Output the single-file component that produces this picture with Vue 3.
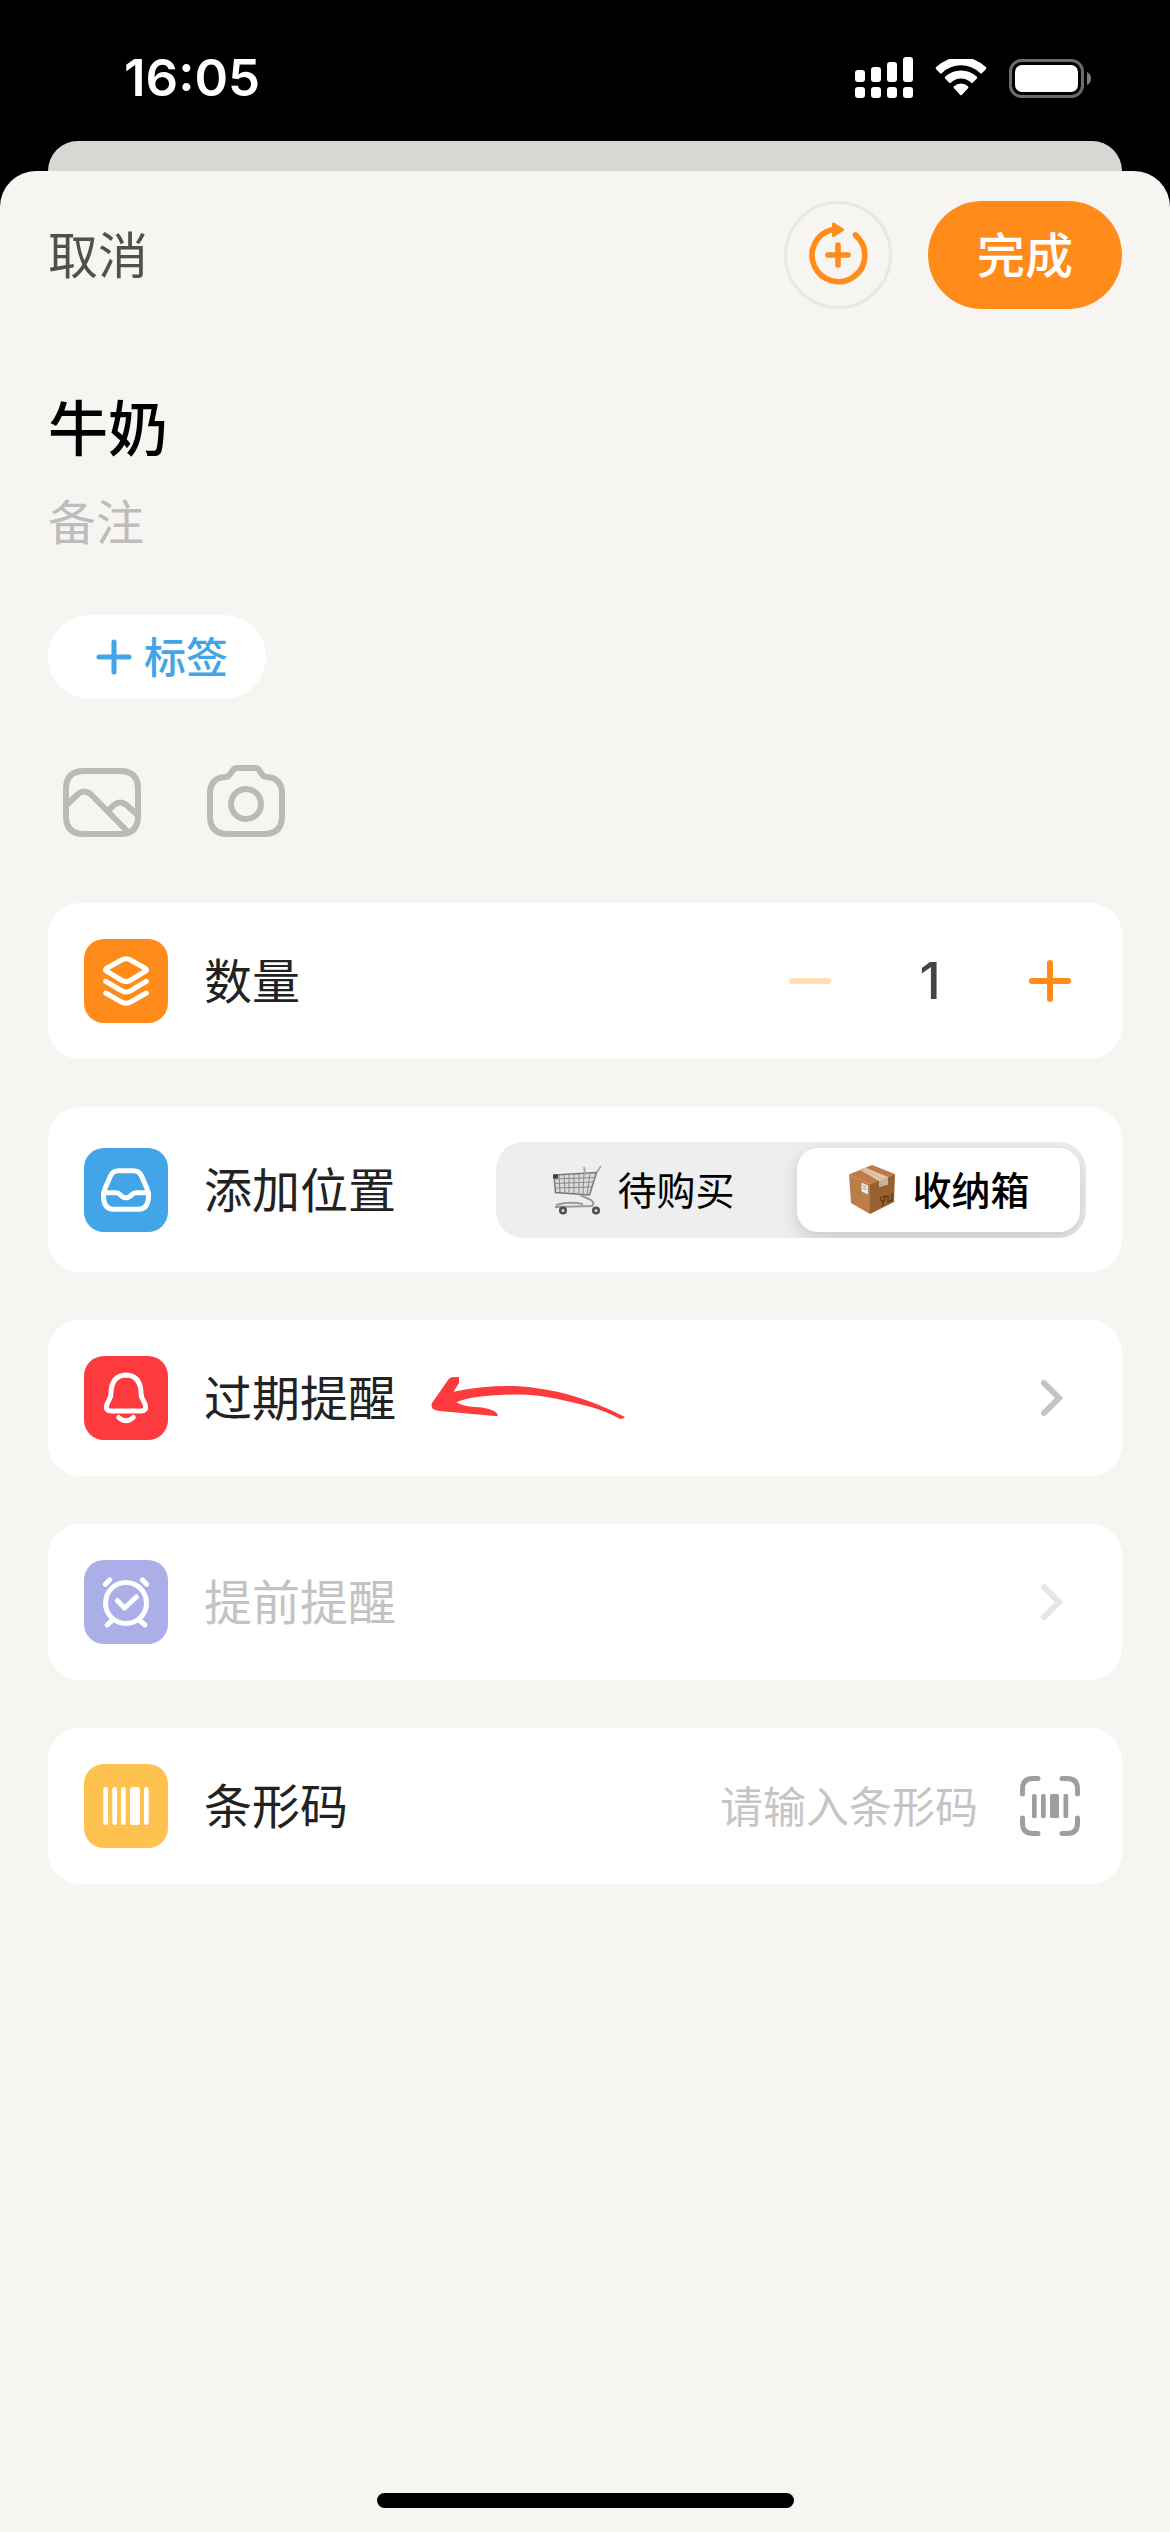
<script setup>
import { ref } from 'vue'

const name = ref('牛奶')
const note = ref('')
const quantity = ref(1)
const place = ref('box')
const barcode = ref('')
</script>

<template>
  <div class="screen">
    <header class="status">
      <span class="clock">16:05</span>
      <div class="indicators">
        <svg width="58" height="42" viewBox="0 0 58 42" fill="#fff" aria-hidden="true">
          <rect x="0" y="13" width="10" height="12" rx="3" />
          <rect x="16" y="10" width="10" height="15" rx="3" />
          <rect x="32" y="5" width="10" height="20" rx="3" />
          <rect x="48" y="0" width="10" height="25" rx="3" />
          <rect x="0" y="30" width="10" height="11" rx="3" />
          <rect x="16" y="30" width="10" height="11" rx="3" />
          <rect x="32" y="30" width="10" height="11" rx="3" />
          <rect x="48" y="30" width="10" height="11" rx="3" />
        </svg>
        <svg width="52" height="38" viewBox="0 0 52 38" fill="#fff" aria-hidden="true">
          <path d="M1.2 10.2a1.5 1.5 0 0 1 0-2.2a36 36 0 0 1 49.6 0a1.5 1.5 0 0 1 0 2.2l-3.6 3.7a1.5 1.5 0 0 1-2.2 0a27.5 27.5 0 0 0-38 0a1.5 1.5 0 0 1-2.2 0z" />
          <path d="M10.3 19.8a1.5 1.5 0 0 1 0-2.2a23 23 0 0 1 31.4 0a1.5 1.5 0 0 1 0 2.2l-3.7 3.7a1.5 1.5 0 0 1-2.1 0a14.5 14.5 0 0 0-19.8 0a1.5 1.5 0 0 1-2.1 0z" />
          <path d="M19 29.2a1.4 1.4 0 0 1 0-2a10.5 10.5 0 0 1 14 0a1.4 1.4 0 0 1 0 2l-6 6.5a1.4 1.4 0 0 1-2 0z" />
        </svg>
        <svg width="82" height="39" viewBox="0 0 82 39" aria-hidden="true">
          <rect x="1.5" y="1.5" width="72" height="36" rx="11" fill="none" stroke="#6b6b6b" stroke-width="3" />
          <rect x="6" y="6" width="63" height="27" rx="7" fill="#fff" />
          <path d="M78 13q4 2 4 6.5t-4 6.5z" fill="#7d7d7d" />
        </svg>
      </div>
    </header>

    <div class="behind"></div>

    <main class="sheet">
      <div class="bar">
        <button type="button" class="cancel">取消</button>
        <div class="actions">
          <button type="button" class="again" aria-label="保存并继续添加">
            <svg width="60" height="66" viewBox="0 0 60 66" fill="none" stroke="#ff8c1a" stroke-width="5.6" stroke-linecap="round" stroke-linejoin="round" aria-hidden="true">
              <path d="M47.4 13A26.4 26.4 0 1 1 25 7.4" />
              <path d="M20 33h20M30 23v20" />
              <path d="M25.5 2v11.500l9-5.700z" fill="#ff8c1a" stroke-width="3" />
            </svg>
          </button>
          <button type="button" class="done">完成</button>
        </div>
      </div>

      <div class="names">
        <input v-model="name" class="title" type="text" aria-label="名称">
        <input v-model="note" class="note" type="text" placeholder="备注" aria-label="备注">
      </div>

      <button type="button" class="tag">
        <svg width="36" height="36" viewBox="0 0 36 36" fill="none" stroke="#42a5e8" stroke-width="5" stroke-linecap="round" aria-hidden="true">
          <path d="M3 18h30M18 3v30" />
        </svg>
        <span class="caption">标签</span>
      </button>

      <div class="media">
        <button type="button" aria-label="相册">
          <svg width="108" height="108" viewBox="0 0 108 108" fill="none" stroke="#bbbab8" stroke-width="6" aria-hidden="true">
            <path d="M36 24H72C84 24 90 30 90 42V69C90 81 84 87 72 87H36C24 87 18 81 18 69V42C18 30 24 24 36 24z" />
            <path d="M19 57.5L30 47Q36 42 42.5 47L80 85M59.5 64L66 58Q72 53 78.5 58L89 67.5" />
          </svg>
        </button>
        <button type="button" aria-label="拍照">
          <svg width="108" height="108" viewBox="0 0 108 108" fill="none" stroke="#bbbab8" stroke-width="6" stroke-linejoin="round" aria-hidden="true">
            <path d="M18 45Q19 31 33 30Q36 30 37.5 28L41 23Q42.5 21 45 21H63Q65.5 21 67 23L70.5 28Q72 30 75 30Q89 31 90 45V69C90 81 84 87 72 87H36C24 87 18 81 18 69z" />
            <circle cx="54" cy="57" r="15" />
          </svg>
        </button>
      </div>

      <div class="rows">
        <section class="card">
          <span class="badge orange">
            <svg viewBox="0 0 84 84" aria-hidden="true">
              <path d="M22.5 29.5L37.5 21Q42 18.5 46.5 21L61.5 29.5Q63.5 31 61.5 32.2L46 41.5Q42 43.5 38 41.5L22.5 32.2Q20.5 31 22.5 29.5z" />
              <path d="M21.7 42.3L38 52Q42 54.2 46 52L62.3 42.3M21.7 54L38 63.3Q42 65.3 46 63.3L62.3 54" />
            </svg>
          </span>
          <label class="label" for="quantity">数量</label>
          <div class="stepper">
            <button type="button" aria-label="减少" :disabled="quantity <= 1" @click="quantity--">
              <svg viewBox="0 0 72 72" stroke="#ffdfb3" aria-hidden="true"><path d="M18 36h36" /></svg>
            </button>
            <input id="quantity" v-model="quantity" type="text" inputmode="numeric">
            <button type="button" aria-label="增加" @click="quantity++">
              <svg viewBox="0 0 72 72" stroke="#ff8c1a" aria-hidden="true"><path d="M18 36h36M36 18v36" /></svg>
            </button>
          </div>
        </section>

        <section class="card place">
          <span class="badge blue">
            <svg viewBox="0 0 84 84" aria-hidden="true">
              <path d="M34.5 22.7H49.5Q55 22.7 57.3 27.5L63 40.5Q65 45 64.5 49Q64 61.3 54.5 61.3H29.5Q20 61.3 19.5 49Q19 45 21 40.5L26.7 27.5Q29 22.7 34.5 22.7z" />
              <path d="M20 44.7H32Q34.5 44.7 36 46.5Q38.5 49.7 42 49.7T48 46.5Q49.5 44.7 52 44.7H64" />
            </svg>
          </span>
          <span id="place-label" class="label">添加位置</span>
          <div class="segments" role="radiogroup" aria-labelledby="place-label">
            <label class="segment" :class="{ on: place === 'cart' }">
              <input v-model="place" type="radio" name="place" value="cart">
              <svg width="50" height="50" viewBox="-1 -1 50 50" fill="none" aria-hidden="true">
                <path d="M1 9L43.5 6.5L36.5 29L2.5 26.5z" fill="#dcdcdc" stroke="#777" stroke-width="1.5" />
                <path d="M1 13L42 11.5M1 17.5L41 16M2 22L39 21M6 9l1 17M11 8.5l1 18M16 8.5v18M21 8.5v18.5M26 8v19.5M31 8l-1 20M37 7.5l-3 21" stroke="#888" />
                <path d="M48 0L43.5 6.5M31 1l1.5 8" stroke="#aaa" stroke-width="2" />
                <path d="M27 29L38 34Q42 37 39 40L2 41M3 39Q16 35 30 38" stroke="#9a9a9a" stroke-width="2" />
                <path d="M0 8.5h5v4H0z" fill="#234763" />
                <circle cx="10" cy="44.5" r="4" fill="#574c4c" /><circle cx="43" cy="44.5" r="4" fill="#574c4c" />
                <circle cx="10" cy="44.5" r="1.5" fill="#ddd" /><circle cx="43" cy="44.5" r="1.5" fill="#ddd" />
              </svg>
              <span class="caption">待购买</span>
            </label>
            <label class="segment" :class="{ on: place === 'box' }">
              <input v-model="place" type="radio" name="place" value="box">
              <svg width="50" height="50" viewBox="-2 0 50 50" aria-hidden="true">
                <path d="M23 0L46 9L21 19L0 9.5z" fill="#c17a45" />
                <path d="M0 9.5L21 19V49L2 38z" fill="#bb7d4a" />
                <path d="M46 9L45 37L21 49V19z" fill="#97612f" />
                <path d="M11 4.7L16 2.5L39 12V19.5L30 22V16z" fill="#dcc9b2" />
                <path d="M13 3.8L34 14" stroke="#c9b095" stroke-width="1" fill="none" />
                <path d="M30 16L39 12V19.5L30 22z" fill="#c9b297" />
                <path d="M12.5 17.5L19 20.5V29.5L12.5 26.5z" fill="#e8e8ea" />
                <path d="M14 20.5l3 1.5M14 23l3.5 1.8" stroke="#8fa0ae" stroke-width="1" />
                <path d="M31 33l6-2l-2 5l-1 1v4M34 37l-3-3M39 30v7l4-2v-7" stroke="#5b3715" stroke-width="1.3" fill="none" />
              </svg>
              <span class="caption">收纳箱</span>
            </label>
          </div>
        </section>

        <button type="button" class="card">
          <span class="badge red">
            <svg viewBox="0 0 84 84" aria-hidden="true">
              <path d="M42 19Q56 19.5 57 36Q57 40.5 58.5 43L61 48Q63.5 55 56.5 55H27.5Q20.5 55 23 48L25.5 43Q27 40.5 27 36Q28 19.5 42 19z" />
              <path d="M34.7 61.5Q42 68 49.3 61.5" />
            </svg>
          </span>
          <span class="label">过期提醒</span>
          <svg class="arrow" width="194" height="42" viewBox="0 0 194 42" fill="#fd3a3e" aria-hidden="true">
            <path d="M1 26L17 3Q19 0 23 0H28V6L22.6 14.7Q50 8.5 83.5 9Q139 11.5 194 40Q192 42 189 42Q179 36 162.6 30.7Q145 26 123 21.3Q103 17 83.5 17.5Q40 18.5 25.4 25.3Q32 29.5 44 30Q62 31 66.5 37V39.3L8.4 34Q-1.5 33 1 26z" />
          </svg>
          <svg class="chevron" viewBox="0 0 72 72" stroke="#c3c3c3" aria-hidden="true"><path d="M30 21L45 36L30 51" /></svg>
        </button>

        <button type="button" class="card off" disabled>
          <span class="badge purple">
            <svg viewBox="0 0 84 84" aria-hidden="true">
              <circle cx="42" cy="43" r="20.5" />
              <path d="M33.3 40.5L40.5 48L52.3 37M27.7 61L23 65M56.3 61L61 65" />
              <path d="M21.3 24.3L25.7 19.8M62.7 24.3L58.3 19.8" />
            </svg>
          </span>
          <span class="label">提前提醒</span>
          <svg class="chevron" viewBox="0 0 72 72" stroke="#e6e6e6" aria-hidden="true"><path d="M30 21L45 36L30 51" /></svg>
        </button>

        <section class="card">
          <span class="badge yellow">
            <svg class="solid" viewBox="0 0 84 84" aria-hidden="true">
              <rect x="19.3" y="23" width="4.7" height="38" rx="2.3" />
              <rect x="28.3" y="23" width="4.7" height="38" rx="2.3" />
              <rect x="37" y="23" width="4.7" height="38" rx="2.3" />
              <rect x="46" y="23" width="10" height="38" rx="2.5" />
              <rect x="60" y="23" width="4.7" height="38" rx="2.3" />
            </svg>
          </span>
          <label class="label" for="barcode">条形码</label>
          <input id="barcode" v-model="barcode" class="code" type="text" placeholder="请输入条形码">
          <button type="button" class="scan" aria-label="扫描条形码">
            <svg viewBox="0 0 72 72" stroke="#9e9e9e" aria-hidden="true">
              <path d="M24 8.5H19Q8.5 8.5 8.5 19V24M48 8.5H53Q63.5 8.5 63.5 19V24M24 63.5H19Q8.5 63.5 8.5 53V48M48 63.5H53Q63.5 63.5 63.5 53V48" />
              <g fill="#9e9e9e" stroke="none">
                <rect x="18" y="24" width="4.7" height="24" rx="1.5" />
                <rect x="27" y="24" width="4.7" height="24" rx="1.5" />
                <rect x="36" y="24" width="9" height="24" rx="1.5" />
                <rect x="49.5" y="24" width="4.7" height="24" rx="1.5" />
              </g>
            </svg>
          </button>
        </section>
      </div>

      <div class="home"></div>
    </main>
  </div>
</template>

<style>
body {
  margin: 0;
  background: #000;
}
</style>

<style scoped>
.screen {
  display: flex;
  flex-direction: column;
  min-height: 100vh;
  background: #000;
  color: #222;
  font-family: "Noto Sans CJK SC", sans-serif;
  font-size: 48px;
  line-height: 72px;
}

.screen * {
  box-sizing: border-box;
}

svg {
  display: block;
  flex: none;
}

button,
input {
  margin: 0;
  padding: 0;
  border: 0;
  background: none;
  color: inherit;
  font: inherit;
  outline: none;
}

.status {
  display: flex;
  align-items: center;
  justify-content: space-between;
  height: 141px;
  padding: 15px 79px 0 124px;
}

.clock {
  color: #fff;
  font-family: Inter, sans-serif;
  font-size: 51px;
  font-weight: 600;
}

.indicators {
  display: flex;
  align-items: center;
  gap: 22px;
}

.behind {
  height: 30px;
  margin: 0 48px;
  border-radius: 30px 30px 0 0;
  background: #d8d7d4;
}

.sheet {
  display: flex;
  flex: 1;
  flex-direction: column;
  padding: 30px 48px 24px;
  border-radius: 36px 36px 0 0;
  background: #f6f5f1;
}

.bar {
  display: flex;
  align-items: center;
  justify-content: space-between;
}

.cancel {
  padding-bottom: 6px;
  color: #51504e;
  font-size: 50px;
}

.actions {
  display: flex;
  gap: 36px;
}

.again {
  display: flex;
  align-items: center;
  justify-content: center;
  width: 108px;
  height: 108px;
  border: 3px solid #e7e7e5;
  border-radius: 54px;
}

.done {
  width: 194px;
  height: 108px;
  padding-bottom: 6px;
  border-radius: 54px;
  background: #ff8c1a;
  color: #fff;
  font-weight: 500;
}

.names {
  display: flex;
  flex-direction: column;
  gap: 22px;
  margin-top: 80px;
}

.title {
  height: 72px;
  color: #000;
  font-size: 60px;
  font-weight: 500;
}

.note {
  height: 72px;
}

.note::placeholder {
  color: #bdbdbd;
  opacity: 1;
}

.tag {
  display: flex;
  align-items: center;
  align-self: flex-start;
  gap: 12px;
  height: 84px;
  margin-top: 60px;
  padding: 0 38px 0 48px;
  border-radius: 42px;
  background: #fff;
  color: #42a5e8;
  font-size: 42px;
  font-weight: 500;
}

.caption {
  padding-bottom: 4px;
}

.media {
  display: flex;
  gap: 36px;
  margin: 48px 0;
}

.rows {
  display: flex;
  flex-direction: column;
  gap: 48px;
}

.card {
  display: flex;
  align-items: center;
  width: 100%;
  min-height: 156px;
  padding: 0 36px;
  border-radius: 32px;
  background: #fff;
  text-align: left;
}

.place {
  min-height: 165px;
}

.badge {
  flex: none;
  width: 84px;
  height: 84px;
  margin-right: 36px;
  border-radius: 20px;
}

.badge svg {
  fill: none;
  stroke: #fff;
  stroke-width: 5;
  stroke-linecap: round;
  stroke-linejoin: round;
}

.badge svg.solid {
  fill: #fff;
  stroke: none;
}

.orange { background: #ff8c1a; }
.blue { background: #42a5e8; }
.red { background: #fd3a3e; }
.purple { background: #acaee8; }
.yellow { background: #ffc24f; }

.label {
  flex: none;
  padding-bottom: 6px;
}

.off {
  color: #c3c3c3;
}

.stepper {
  display: flex;
  align-items: center;
  margin-left: auto;
}

.stepper button,
.scan {
  flex: none;
  width: 72px;
  height: 72px;
}

.stepper input {
  width: 168px;
  color: #444;
  font-family: Inter, sans-serif;
  font-size: 51px;
  font-weight: 500;
  text-align: center;
}

.stepper svg,
.chevron,
.scan svg {
  width: 72px;
  height: 72px;
  fill: none;
  stroke-width: 6;
  stroke-linecap: round;
}

.scan svg {
  stroke-width: 5;
}

.chevron {
  margin-left: auto;
}

.arrow {
  margin-left: 35px;
}

.segments {
  display: grid;
  grid-template-columns: 1fr 1fr;
  gap: 12px;
  width: 590px;
  height: 96px;
  margin-left: auto;
  padding: 6px;
  border-radius: 27px;
  background: #eee;
  overflow: hidden;
}

.segment {
  display: flex;
  align-items: center;
  justify-content: center;
  gap: 15px;
  border-radius: 21px;
  color: #000;
  font-size: 39px;
}

.segment input {
  position: absolute;
  opacity: 0;
}

.segment.on {
  background: #fff;
  box-shadow: 0 6px 18px rgba(0, 0, 0, 0.16);
  font-weight: 500;
}

.code {
  flex: 1;
  min-width: 0;
  margin: 0 36px;
  padding-bottom: 4px;
  font-size: 43px;
  text-align: right;
}

.code::placeholder {
  color: #c5c5c7;
  opacity: 1;
}

.home {
  align-self: center;
  width: 417px;
  height: 15px;
  margin-top: auto;
  border-radius: 8px;
  background: #000;
}
</style>
